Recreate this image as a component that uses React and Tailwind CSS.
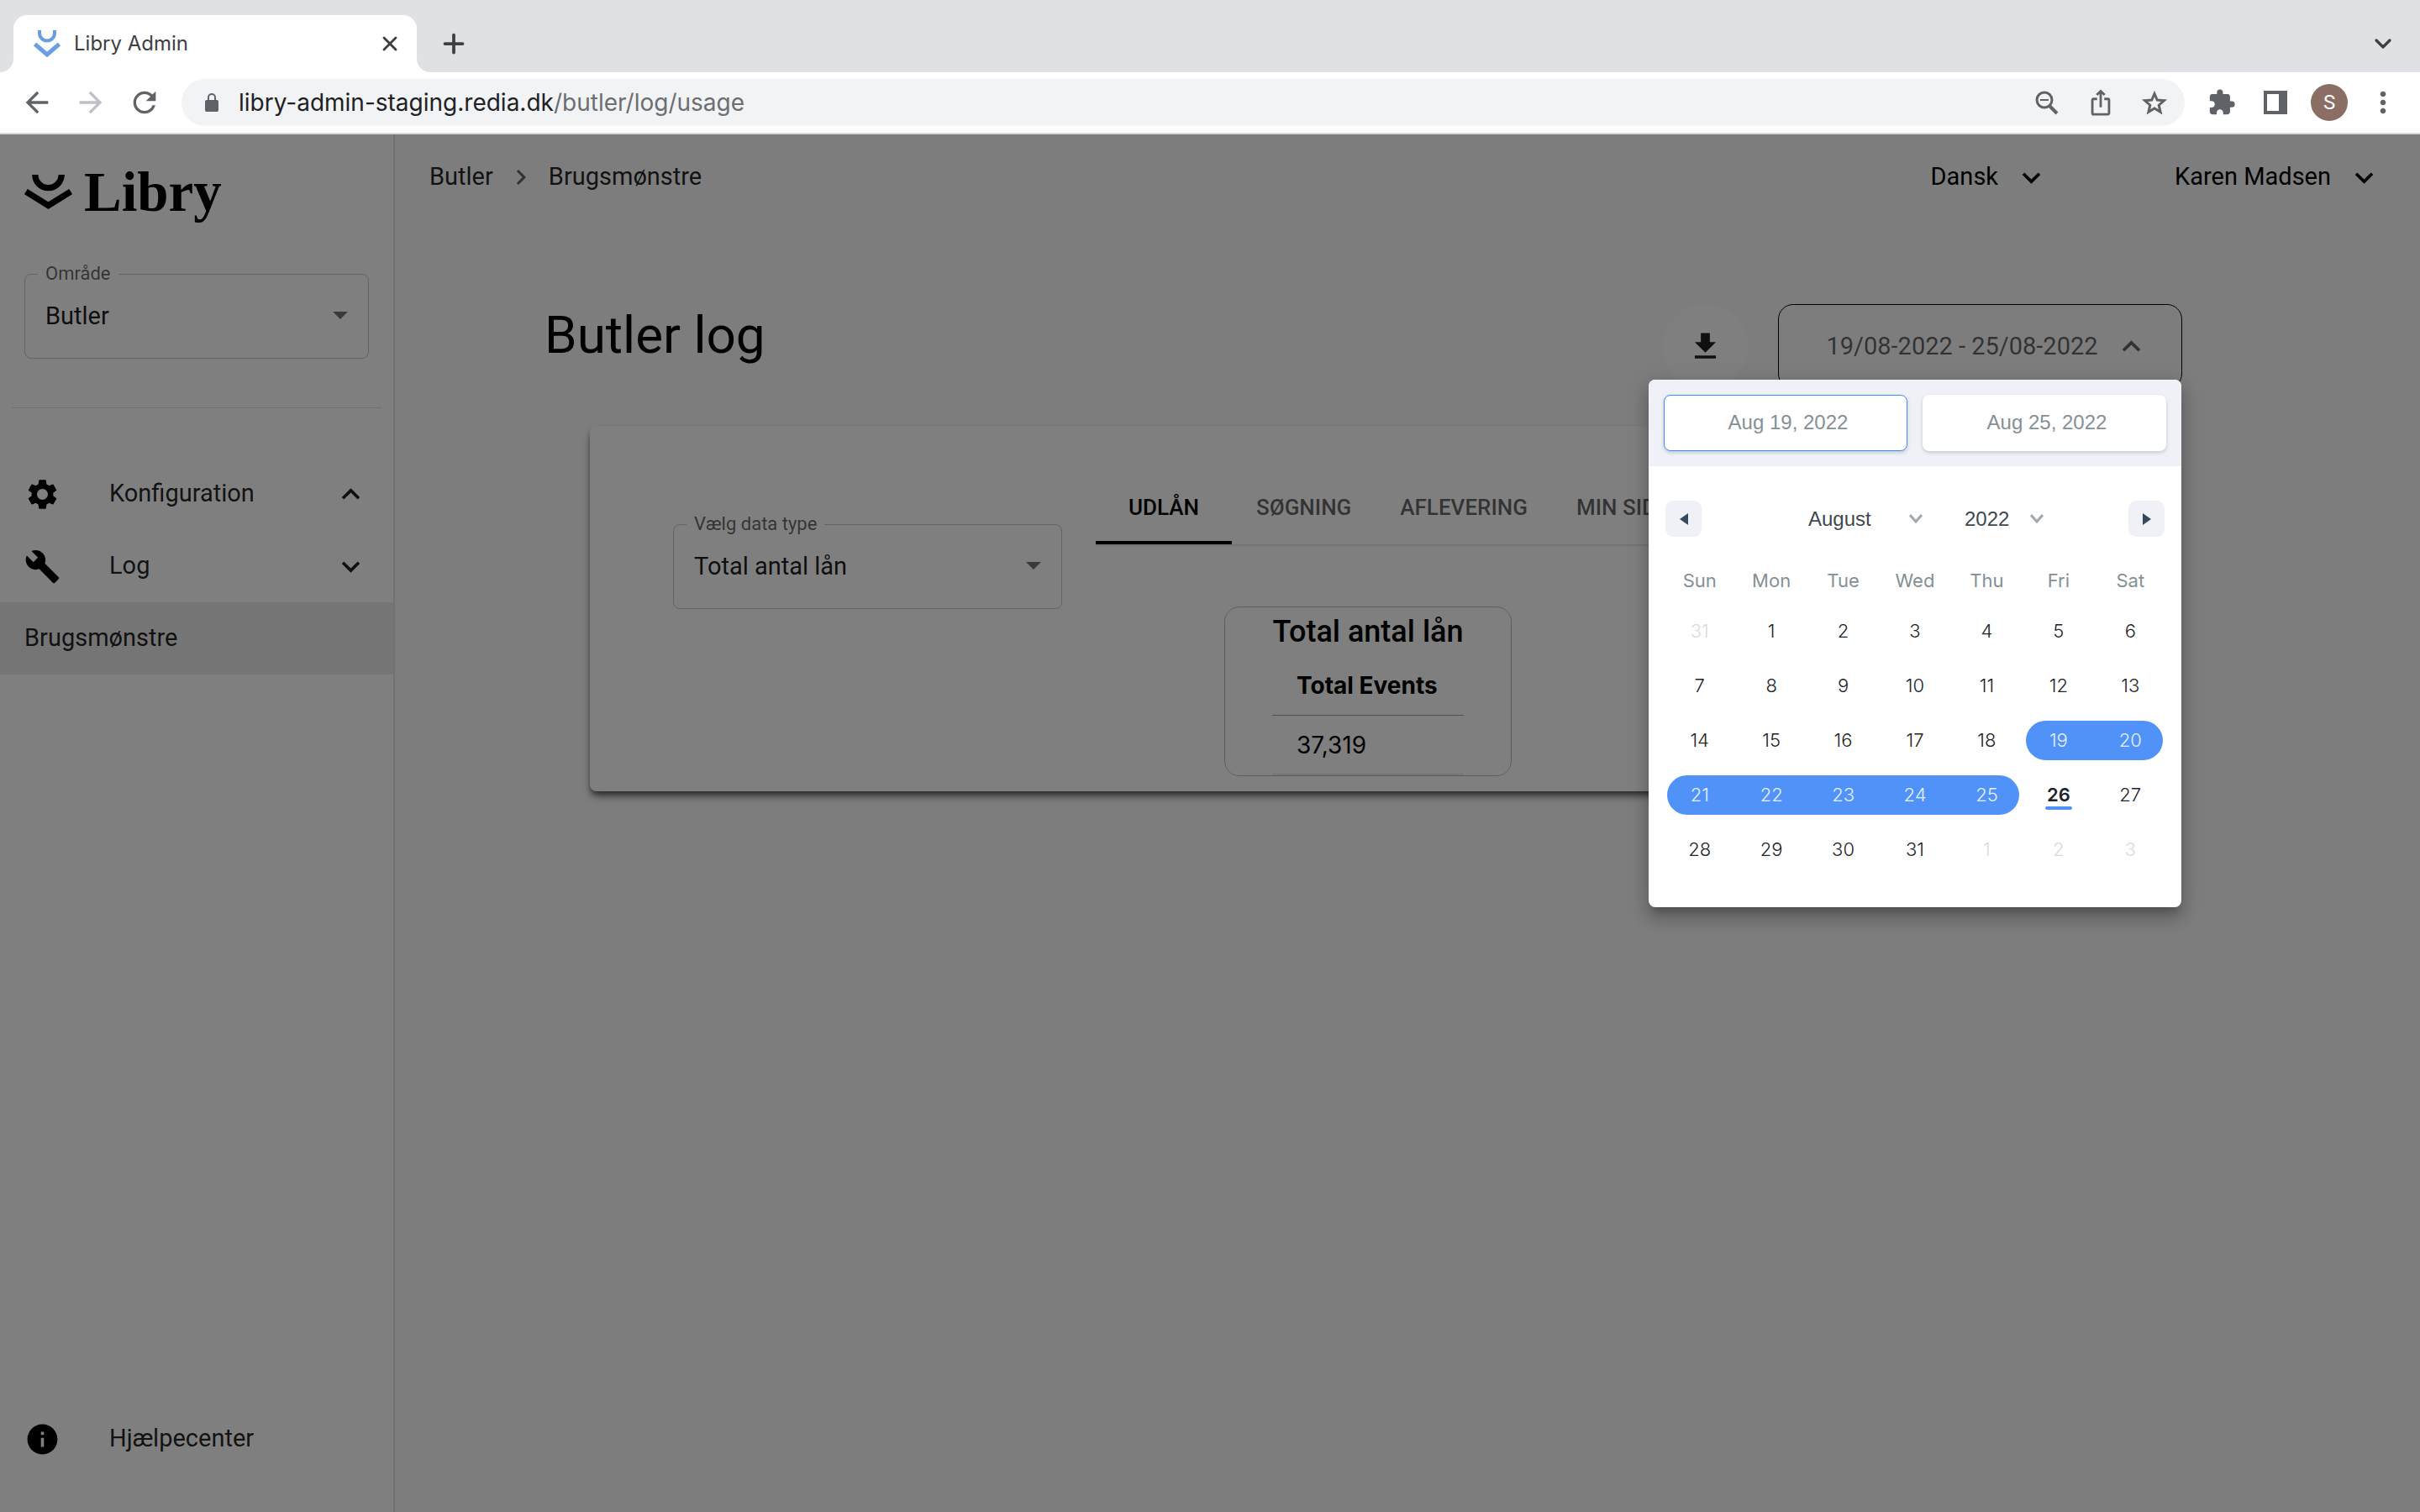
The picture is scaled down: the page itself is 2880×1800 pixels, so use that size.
import React, { useState } from 'react'
import { ChevronDown, Plus, X } from 'lucide-react'
import {
  MdArrowBack,
  MdArrowForward,
  MdBuild,
  MdExpandLess,
  MdExpandMore,
  MdExtension,
  MdFileDownload,
  MdInfo,
  MdIosShare,
  MdMoreVert,
  MdNavigateNext,
  MdRefresh,
  MdSettings,
} from 'react-icons/md'

const weekdays = ['Sun', 'Mon', 'Tue', 'Wed', 'Thu', 'Fri', 'Sat'];

const months = ['January', 'February', 'March', 'April', 'May', 'June', 'July', 'August', 'September', 'October', 'November', 'December'];

const tabs = ['UDLÅN', 'SØGNING', 'AFLEVERING', 'MIN SIDE'];

// 31 July - 3 September 2022
const days = Array.from({ length: 35 }, (_, i) => {
  const date = new Date(2022, 6, 31 + i);
  return { index: i, day: date.getDate(), current: date.getMonth() === 7 };
});

const BrowserBar = () => (
  <header className="shrink-0 font-[Inter,sans-serif]">
    <div className="flex h-[86px] items-end bg-[#dfe1e5] pl-4 pr-4">
      <div className="relative flex h-[68px] w-[480px] items-center rounded-t-2xl bg-white pl-6 pr-[18px]">
        <svg className="absolute bottom-0 -left-4 h-4 w-4" viewBox="0 0 16 16" fill="#fff">
          <path d="M16 0v16H0A16 16 0 0 0 16 0z" />
        </svg>
        <svg className="absolute bottom-0 -right-4 h-4 w-4" viewBox="0 0 16 16" fill="#fff">
          <path d="M0 0v16h16A16 16 0 0 1 0 0z" />
        </svg>
        <svg className="h-8 w-8" viewBox="0 0 32 32" fill="none" stroke="#6a9de4">
          <path d="M7 0v3.500a9 9 0 0 0 18 0V0" strokeWidth="4" />
          <path d="M1.500 16.500 16 29l14.500-12.500" strokeWidth="5" />
        </svg>
        <span className="ml-4 flex-1 text-[24px] text-[#3c4043]">Libry Admin</span>
        <button aria-label="Close tab" className="text-[#3c4043]">
          <X size={28} strokeWidth={2.5} />
        </button>
      </div>
      <button aria-label="New tab" className="ml-[26px] flex h-[68px] items-center text-[#3c4043]">
        <Plus size={36} strokeWidth={2.5} />
      </button>
      <button aria-label="Search tabs" className="ml-auto mr-3 flex h-[68px] items-center text-[#3c4043]">
        <ChevronDown size={32} strokeWidth={2.5} />
      </button>
    </div>

    <div className="flex h-[74px] items-center border-b-2 border-[#d9dad9] bg-white pl-6 pr-6 text-[#5f6368]">
      <button aria-label="Back"><MdArrowBack size={40} /></button>
      <button aria-label="Forward" className="ml-6 text-[#bdc1c6]"><MdArrowForward size={40} /></button>
      <button aria-label="Reload" className="ml-6"><MdRefresh size={40} /></button>
      <div className="ml-6 flex h-14 flex-1 items-center rounded-full bg-[#f1f3f4] pl-6 pr-[19px]">
        <svg className="h-6 w-6" viewBox="0 0 24 24">
          <rect x="4" y="9" width="16" height="14" rx="2" fill="currentColor" />
          <path d="M8 10V6a4 4 0 0 1 8 0v4" fill="none" stroke="currentColor" strokeWidth="2" />
        </svg>
        <p className="ml-5 flex-1 text-[28px] text-[#6b6e72]">
          <span className="text-[#202124]">libry-admin-staging.redia.dk</span>/butler/log/usage
        </p>
        <button aria-label="Zoom">
          <svg className="h-9 w-9" viewBox="0 0 36 36" fill="none" stroke="currentColor" strokeWidth="3">
            <circle cx="14" cy="15" r="9" />
            <path d="m20 22 9 9" strokeWidth="4" />
            <path d="M9 15h10" strokeWidth="2" />
          </svg>
        </button>
        <button aria-label="Share" className="ml-7"><MdIosShare size={34} /></button>
        <button aria-label="Bookmark" className="ml-[30px]">
          <svg className="h-[34px] w-[34px]" viewBox="0 0 34 34" fill="none" stroke="currentColor" strokeWidth="3">
            <path d="m17 6.500 3.200 7.600 8.200.700-6.200 5.400 1.900 8.100-7.100-4.300-7.100 4.300 1.900-8.100-6.200-5.400 8.200-.700z" />
          </svg>
        </button>
      </div>
      <button aria-label="Extensions" className="ml-[27px]"><MdExtension size={34} /></button>
      <button aria-label="Side panel" className="ml-[33px]">
        <svg className="h-7 w-7" viewBox="0 0 28 28">
          <path d="M0 0h28v28H0zM4 4v20h14V4z" fill="currentColor" fillRule="evenodd" />
        </svg>
      </button>
      <button aria-label="Profile" className="ml-7 h-11 w-11 rounded-full bg-[#8a6e64] font-[Roboto,sans-serif] text-[24px] text-white">S</button>
      <button aria-label="Menu" className="ml-[22px]"><MdMoreVert size={40} /></button>
    </div>
  </header>
);

const OutlinedSelect = ({ id, label, value, className }) => (
  <fieldset className={`relative rounded-lg border border-[#c8c8c8] pb-[10px] ${className}`}>
    <legend className="ml-[15px] px-[9px] text-[22px] leading-6 text-black/60">
      <label htmlFor={id}>{label}</label>
    </legend>
    <select id={id} className="block h-[78px] w-full appearance-none bg-transparent px-6 text-[29px] text-black/90">
      <option>{value}</option>
    </select>
    <svg className="pointer-events-none absolute right-6 bottom-[46px] h-[9px] w-[18px]" viewBox="0 0 18 9" fill="#757575">
      <path d="M0 0h18L9 9z" />
    </svg>
  </fieldset>
);

const Sidebar = () => (
  <aside className="flex w-[470px] shrink-0 flex-col border-r-2 border-[#e0e0e0] bg-white pb-11 text-black/87">
    <div className="flex h-[154px] items-start gap-[14px] pl-[29px] pt-[32px] text-black">
      <svg className="mt-4 h-[41px] w-[57px]" viewBox="87 174 170 123" fill="none" stroke="currentColor" strokeWidth="22">
        <path d="M125 174a47 47 0 0 0 94 0" />
        <path d="m92 234 80 50 80-50" />
      </svg>
      <span className="font-['Liberation_Serif',serif] text-[67px] leading-[72px] font-bold">Libry</span>
    </div>

    <OutlinedSelect id="area" label="Område" value="Butler" className="mx-[29px]" />

    <hr className="mx-[14px] mt-[58px] border-[#e0e0e0]" />

    <nav className="mt-[59px] flex flex-1 flex-col text-[29px]">
      <button className="flex h-[86px] items-center px-[29px]">
        <MdSettings size={43} className="text-black" />
        <span className="ml-[58px] flex-1 text-left">Konfiguration</span>
        <MdExpandLess size={43} />
      </button>
      <button className="flex h-[86px] items-center px-[29px]">
        <MdBuild size={43} className="text-black" />
        <span className="ml-[58px] flex-1 text-left">Log</span>
        <MdExpandMore size={43} />
      </button>
      <a href="#usage" className="flex h-[86px] items-center bg-[#ebebeb] pl-[29px]">Brugsmønstre</a>
      <a href="#help" className="mt-auto flex h-[86px] items-center pl-[29px]">
        <MdInfo size={43} className="text-black" />
        <span className="ml-[58px]">Hjælpecenter</span>
      </a>
    </nav>
  </aside>
);

const dayStyle = ({ index, day, current }) => {
  if (!current) return 'text-[#d5dce0]';
  if (day >= 19 && day <= 25) {
    const first = day === 19 || index % 7 === 0;
    const last = day === 25 || index % 7 === 6;
    return `bg-[#5192f9] text-white/85 ${first ? 'ml-1 rounded-l-full pr-1' : ''} ${last ? 'mr-1 rounded-r-full pl-1' : ''}`;
  }
  if (day === 26) return 'font-semibold text-[#1d2429]';
  return 'text-[#1d2429]';
};

const PickerSelect = ({ label, value, options, onChange, className }) => (
  <div className={`relative ${className}`}>
    <select
      aria-label={label}
      value={value}
      onChange={(e) => onChange(e.target.value)}
      className="block h-[43px] w-full appearance-none bg-transparent pl-[18px] text-[24px] text-[#3e484f]"
    >
      {options.map(option => <option key={option}>{option}</option>)}
    </select>
    <svg className="pointer-events-none absolute top-4 right-[14px] h-3 w-4" viewBox="0 0 16 12" fill="none" stroke="#a3a9ad" strokeWidth="3">
      <path d="m1 1 7 8 7-8" />
    </svg>
  </div>
);

const DatePicker = () => {
  const [month, setMonth] = useState('August');
  const [year, setYear] = useState('2022');

  return (
    <div className="absolute top-[90px] right-px z-20 w-[634px] overflow-hidden rounded-lg bg-white pb-9 font-['Liberation_Sans',sans-serif] shadow-[0_9px_9px_-5px_rgba(0,0,0,0.2),0_14px_18px_2px_rgba(0,0,0,0.14),0_5px_25px_4px_rgba(0,0,0,0.12)]">
      <div className="flex gap-[18px] bg-[#eff1f6] p-[18px] text-[24px] text-[#849095]">
        <input
          aria-label="Start date"
          readOnly
          value="Aug 19, 2022"
          className="h-[67px] w-0 flex-1 rounded-lg border border-[#3d8bff] bg-white pb-px pl-[6px] text-center shadow-[0_2px_4px_rgba(35,57,66,0.21)]"
        />
        <input
          aria-label="End date"
          readOnly
          value="Aug 25, 2022"
          className="h-[67px] w-0 flex-1 rounded-lg border border-transparent bg-white pb-px pl-[6px] text-center shadow-[0_2px_4px_rgba(35,57,66,0.21)]"
        />
      </div>

      <div className="mt-[41px] flex items-center px-5">
        <button aria-label="Previous month" className="flex h-[43px] w-[43px] items-center justify-center rounded-[9px] bg-[#eff1f6]">
          <svg className="h-[14px] w-[10px]" viewBox="0 0 10 14" fill="#34495e"><path d="M10 0v14L0 7z" /></svg>
        </button>
        <div className="flex flex-1 justify-center gap-[18px] pl-[22px]">
          <PickerSelect label="Month" value={month} options={months} onChange={setMonth} className="w-[168px]" />
          <PickerSelect label="Year" value={year} options={['2021', '2022', '2023']} onChange={setYear} className="w-[126px]" />
        </div>
        <button aria-label="Next month" className="flex h-[43px] w-[43px] items-center justify-center rounded-[9px] bg-[#eff1f6]">
          <svg className="h-[14px] w-[10px]" viewBox="0 0 10 14" fill="#34495e"><path d="M0 0v14l10-7z" /></svg>
        </button>
      </div>

      <div className="mt-[25px] grid grid-cols-7 px-[18px] font-[Inter,sans-serif] text-[22px]">
        {weekdays.map(name => (
          <span key={name} className="flex h-[55px] items-center justify-center text-[#849095]">{name}</span>
        ))}
        {days.map(item => (
          <button key={item.index} className="flex h-[65px] items-center font-light">
            <span className={`relative flex h-[47px] flex-1 items-center justify-center ${dayStyle(item)}`}>
              {item.day}
              {item.current && item.day === 26 && (
                <span className="absolute bottom-[6px] h-1 w-8 rounded-full bg-[#5192f9]" />
              )}
            </span>
          </button>
        ))}
      </div>
    </div>
  );
};

const UsageCard = () => {
  const [active, setActive] = useState('UDLÅN');

  return (
    <section className="mx-[54px] mt-11 flex items-start rounded-lg bg-white pt-[55px] pb-[18px] pl-[99px] shadow-[0_5px_7px_-1px_rgba(0,0,0,0.5),0_8px_12px_-3px_rgba(0,0,0,0.35)]">
      <OutlinedSelect id="data-type" label="Vælg data type" value="Total antal lån" className="mt-[50px] w-[463px]" />

      <div className="ml-10 flex-1">
        <div className="flex border-b-2 border-[#e8e8e8]">
          {tabs.map(tab => (
            <button
              key={tab}
              onClick={() => setActive(tab)}
              className={`h-[86px] min-w-[162px] border-b-4 px-[29px] pt-[2px] text-[26px] font-medium ${tab === active ? 'border-black text-black' : 'border-transparent text-black/60'}`}
            >
              {tab}
            </button>
          ))}
        </div>

        <div className="mt-[72px] ml-[153px] w-[342px] rounded-[18px] border border-[#bdbdbd] px-14">
          <h2 className="text-center text-[36px] leading-[58px] font-medium whitespace-nowrap">Total antal lån</h2>
          <table className="w-full text-left font-[Inter,sans-serif] text-[28px]">
            <thead>
              <tr className="h-[70px] border-b border-[#a0a0a0]">
                <th className="pl-[29px] font-bold whitespace-nowrap">Total Events</th>
              </tr>
            </thead>
            <tbody>
              <tr className="h-[71px] border-b-2 border-[#ebebeb]">
                <td className="pt-[2px] pl-[29px]">37,319</td>
              </tr>
            </tbody>
          </table>
        </div>
      </div>
    </section>
  );
};

const App = () => {
  return (
    <div className="flex min-h-screen flex-col font-[Roboto,sans-serif]">
      <BrowserBar />

      <div className="relative isolate flex flex-1 bg-[#fafafa]">
        <Sidebar />

        <main className="flex-1 text-[29px]">
          <div className="flex h-[102px] items-center pl-[41px] pr-[45px] text-black/87">
            <nav className="flex items-center">
              <a href="#butler">Butler</a>
              <MdNavigateNext size={36} className="mx-[15px] text-black/60" />
              <a href="#usage">Brugsmønstre</a>
            </nav>
            <button className="ml-auto flex items-center gap-[18px] text-black">
              Dansk <MdExpandMore size={43} />
            </button>
            <button className="ml-[149px] flex items-center gap-[18px] text-black">
              Karen Madsen <MdExpandMore size={43} />
            </button>
          </div>

          <div className="pt-[100px] pl-[178px] pr-[283px]">
            <div className="flex items-start">
              <h1 className="flex-1 text-[62px] leading-[74px]">Butler log</h1>
              <button aria-label="Download" className="flex h-[101px] w-[101px] items-center justify-center rounded-full bg-white text-black/87">
                <MdFileDownload size={43} />
              </button>
              <div className="relative ml-9">
                <button className="flex h-[101px] w-[481px] items-center justify-center gap-[18px] rounded-[18px] border border-black pl-[18px] text-black/60">
                  19/08-2022 - 25/08-2022 <MdExpandLess size={43} />
                </button>
                <DatePicker />
              </div>
            </div>

            <UsageCard />
          </div>
        </main>

        {/* Backdrop behind the open date picker */}
        <div className="absolute inset-0 z-10 bg-black/50" />
      </div>
    </div>
  );
};

export default App;
